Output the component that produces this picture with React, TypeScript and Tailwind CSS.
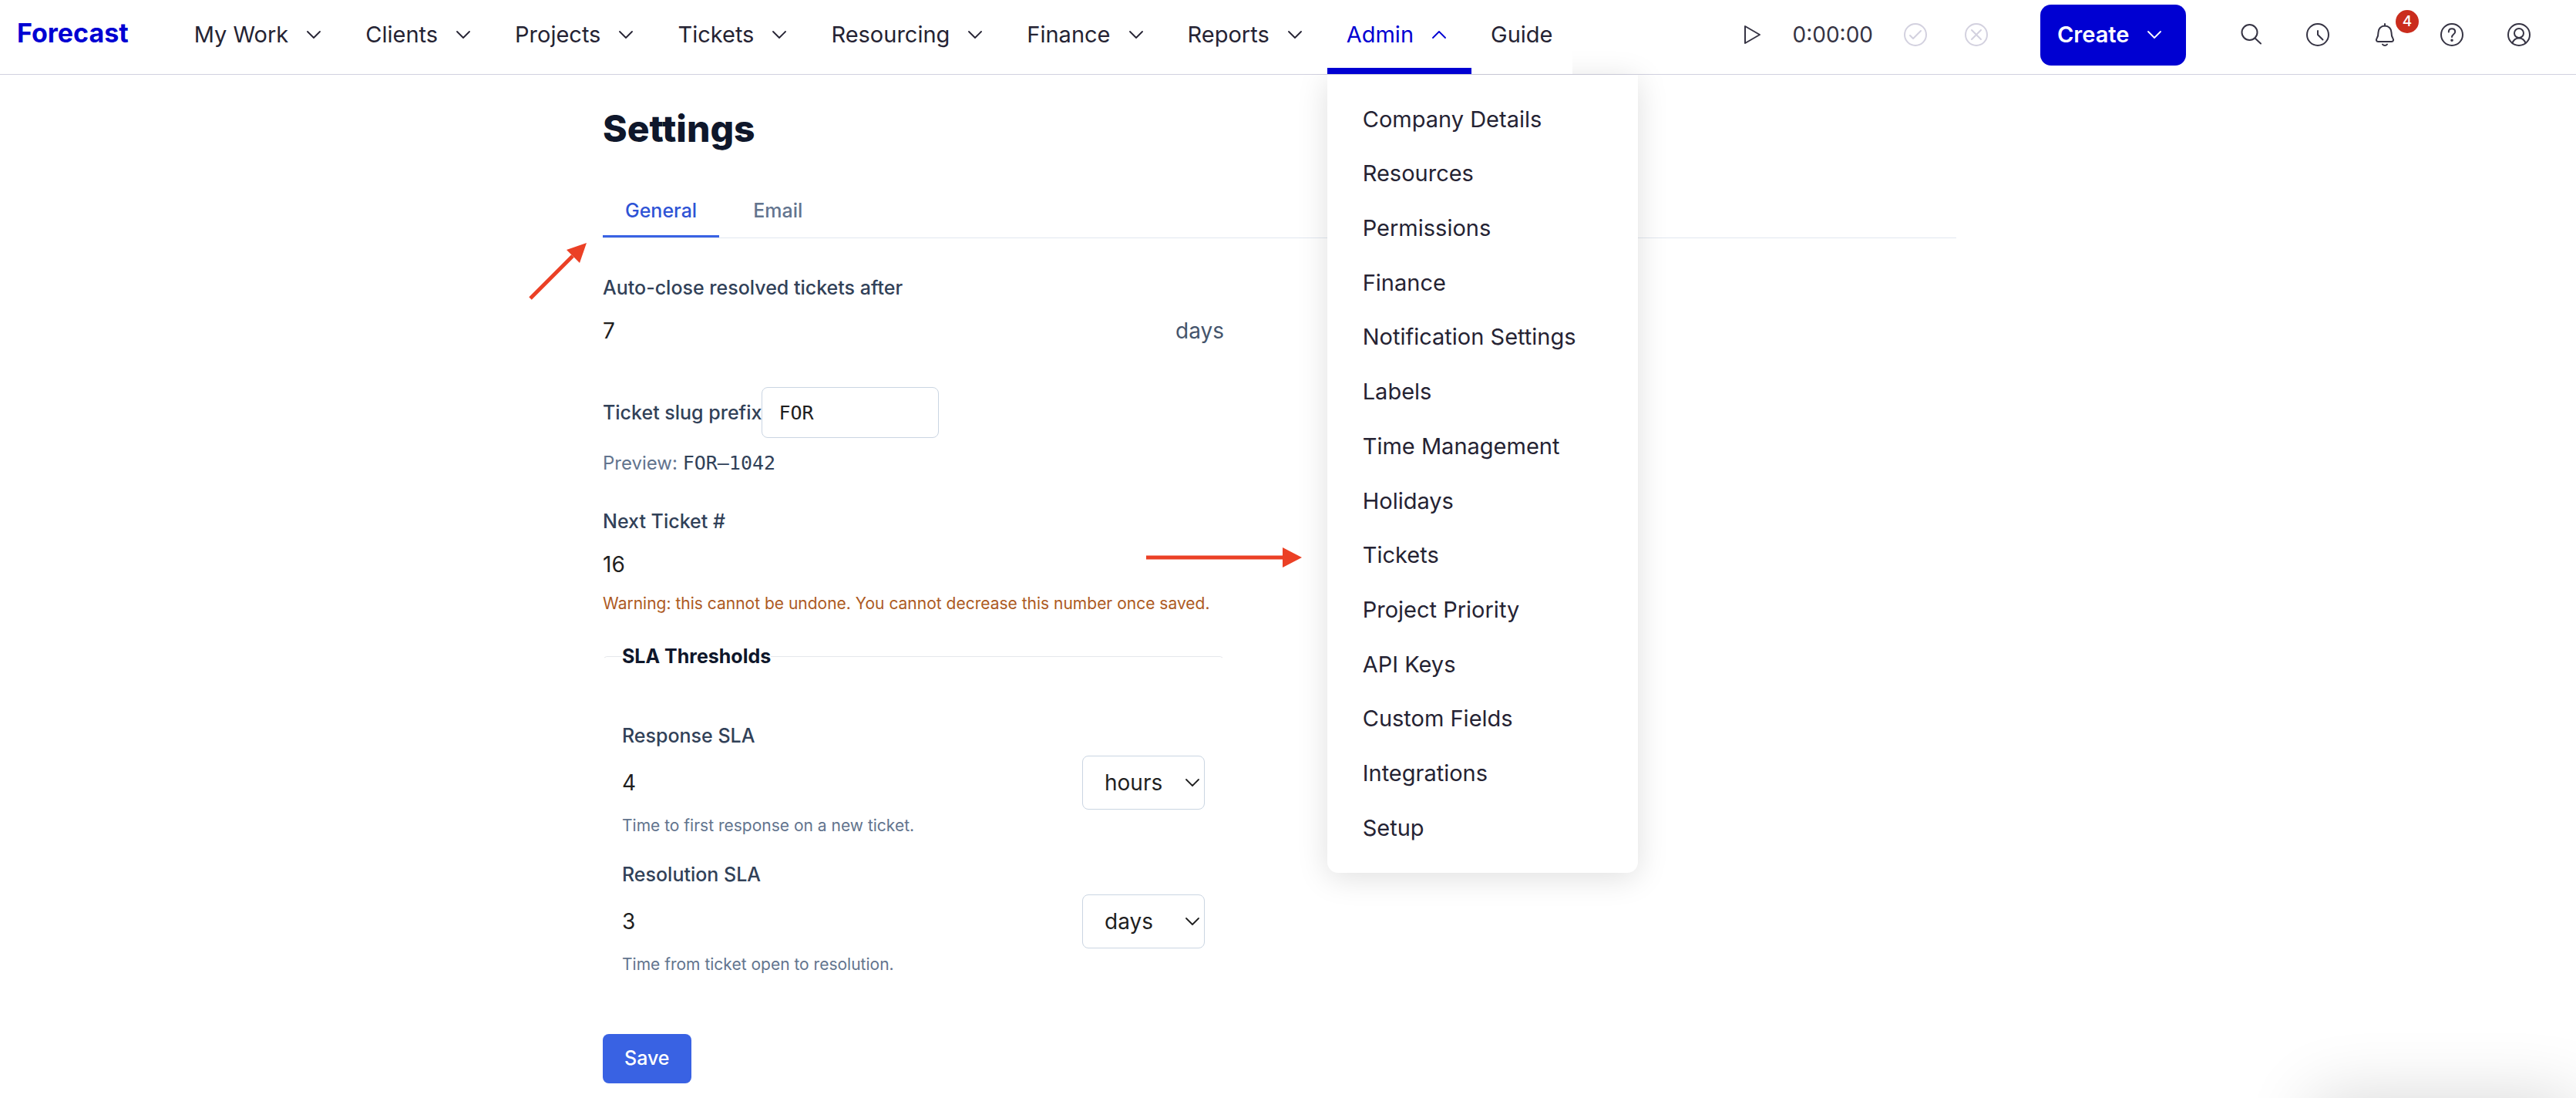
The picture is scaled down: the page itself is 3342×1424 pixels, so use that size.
import React from "react";

const NAV = ["My Work", "Clients", "Projects", "Tickets", "Resourcing", "Finance", "Reports", "Admin"];

const ADMIN_MENU = [
  "Company Details",
  "Resources",
  "Permissions",
  "Finance",
  "Notification Settings",
  "Labels",
  "Time Management",
  "Holidays",
  "Tickets",
  "Project Priority",
  "API Keys",
  "Custom Fields",
  "Integrations",
  "Setup",
];

function Chevron({ up = false }: { up?: boolean }) {
  return (
    <svg width="18" height="10" viewBox="0 0 18 10" fill="none" stroke="currentColor" strokeWidth="1.8" strokeLinecap="round" strokeLinejoin="round" aria-hidden="true">
      <path d={up ? "M1 9 9 1l8 8" : "M1 1l8 8 8-8"} />
    </svg>
  );
}

function Icon({ children }: { children: React.ReactNode }) {
  return (
    <svg className="block" width="30" height="30" viewBox="0 0 30 30" fill="none" stroke="currentColor" strokeWidth="2" strokeLinecap="round" strokeLinejoin="round" aria-hidden="true">
      {children}
    </svg>
  );
}

function NavItem({ label }: { label: string }) {
  const active = label === "Admin";
  return (
    <li className="relative">
      <button
        type="button"
        aria-expanded={active}
        className={
          active
            ? "relative z-20 flex h-24 items-center gap-6 border-b-8 border-[#0000d2] bg-white pt-0.5 pr-[33px] pl-[25px] text-[#0000d2]"
            : "relative z-20 flex h-24 items-center gap-6 bg-white pr-[33px] pb-[6px] pl-[25px]"
        }
      >
        {label}
        <Chevron up={active} />
      </button>
      {active && (
        <div className="absolute top-[97px] left-0 z-10 w-[403px] rounded-b-[14px] bg-white pt-[22px] pb-[23px] shadow-[0_6px_40px_rgba(0,0,0,0.13)]">
          <ul className="grid h-[990px] auto-rows-fr">
            {ADMIN_MENU.map((item) => (
              <li key={item} className="flex">
                <a href="#" className="flex flex-1 items-center pl-[46px]">
                  {item}
                </a>
              </li>
            ))}
          </ul>
        </div>
      )}
    </li>
  );
}

function Header() {
  return (
    <header className="flex h-[97px] items-stretch justify-between border-b border-[#d1d1df] pr-[59px] pl-[22px] text-[29px] text-[#252333]">
      <div className="flex">
        <a href="#" className="mr-[60px] flex items-center pb-3 text-[34px] font-bold text-[#0000d2]">
          Forecast
        </a>
        <nav>
          <ul className="flex">
            {NAV.map((label) => (
              <NavItem key={label} label={label} />
            ))}
            <li>
              <a href="#" className="relative z-20 flex h-24 items-center bg-white px-[25px] pb-[6px]">
                Guide
              </a>
            </li>
          </ul>
        </nav>
      </div>

      <div className="flex items-center pb-[6px] text-[#363444]">
        <button type="button" aria-label="Start timer">
          <Icon>
            <path d="M6 4v22l19-11z" />
          </Icon>
        </button>
        <span className="ml-[38px] text-[28px]">0:00:00</span>
        <button type="button" aria-label="Save timer" className="ml-10 text-[#d3d1df]">
          <Icon>
            <circle cx="15" cy="15" r="14" />
            <path d="M8 16l4 4 10-10" />
          </Icon>
        </button>
        <button type="button" aria-label="Discard timer" className="ml-[49px] text-[#d3d1df]">
          <Icon>
            <circle cx="15" cy="15" r="14" />
            <path d="M9 9l12 12M21 9L9 21" />
          </Icon>
        </button>
        <button type="button" className="ml-[68px] flex h-[79px] w-[189px] items-center justify-between rounded-[14px] bg-[#0000d2] pr-8 pl-[22px] font-semibold text-white">
          Create
          <Chevron />
        </button>
        <div className="ml-[69px] flex gap-[57px]">
          <button type="button" aria-label="Search">
            <Icon>
              <circle cx="13.500" cy="12" r="10" />
              <path d="M20.500 19.500l7.500 7" />
            </Icon>
          </button>
          <button type="button" aria-label="Time tracking">
            <Icon>
              <circle cx="15" cy="15" r="14" />
              <path d="M15 10v5l6.500 6.500" />
            </Icon>
          </button>
          <button type="button" aria-label="Notifications, 4 unread" className="relative">
            <Icon>
              <path d="M15 1v2.500" />
              <path d="M15 3.500c-5 0-8.500 3.800-8.500 8.500 0 4.500-.8 6.300-2 8-1.200 1.800-.5 4 1.800 4h17.400c2.300 0 3-2.200 1.800-4-1.200-1.700-2-3.500-2-8 0-4.700-3.500-8.500-8.500-8.500z" />
              <path d="M12 27.500c1.500 2 4.500 2 6 0" />
            </Icon>
            <span className="absolute -top-[17px] left-[29px] flex size-[30px] items-center justify-center rounded-full bg-[#ca2c1d] text-[19px] font-medium text-white">4</span>
          </button>
          <button type="button" aria-label="Help">
            <Icon>
              <circle cx="15" cy="15" r="14" />
              <path d="M10.800 11.500c0-2.700 1.800-4.300 4.200-4.300s4.200 1.600 4.200 4c0 3.400-4.200 3.200-4.200 6.800" />
              <circle cx="15" cy="22.300" r=".8" fill="currentColor" />
            </Icon>
          </button>
          <button type="button" aria-label="Account">
            <Icon>
              <circle cx="15" cy="15" r="14" />
              <circle cx="15" cy="13" r="6" />
              <path d="M6.500 26c1.300-4 4.600-6.500 8.500-6.500s7.200 2.500 8.500 6.500" />
            </Icon>
          </button>
        </div>
      </div>
    </header>
  );
}

function SlaField({ id, label, value, unit, help }: { id: string; label: string; value: string; unit: string; help: string }) {
  return (
    <div>
      <label htmlFor={id} className="block text-[25px] leading-9 font-medium text-slate-700">
        {label}
      </label>
      <div className="mt-2 flex h-[70px] items-stretch justify-between text-[28px] text-[#1f1f1f]">
        <input id={id} defaultValue={value} className="min-w-0 flex-1 bg-transparent outline-none" />
        <div className="relative w-[159px]">
          <select aria-label={label + " unit"} defaultValue={unit} className="size-full appearance-none rounded-lg border border-slate-300 bg-white pl-7">
            <option>hours</option>
            <option>days</option>
          </select>
          <span className="pointer-events-none absolute inset-y-0 right-[7px] flex items-center">
            <Chevron />
          </span>
        </div>
      </div>
      <p className="mt-[7px] text-[21px] leading-7 text-slate-500">{help}</p>
    </div>
  );
}

export default function App() {
  return (
    <div className="min-h-screen overflow-hidden bg-white font-['Inter',sans-serif]">
      <Header />
      <main className="pr-[22px] pb-[19px]">
        <div className="mx-auto max-w-[1756px]">
          <h1 className="pt-[41px] text-[48px] leading-[58px] font-extrabold text-slate-900">Settings</h1>

          <div className="relative mt-[38px]">
            <div role="tablist" className="flex gap-[15px] border-b border-slate-200 text-[25px] leading-9 font-medium">
              <button type="button" role="tab" aria-selected="true" className="border-b-[3px] border-[#3962e3] px-[29px] pt-[21px] pb-[14px] text-[#2e53d5]">
                General
              </button>
              <button type="button" role="tab" aria-selected="false" className="border-b-[3px] border-transparent px-[29px] pt-[21px] pb-[14px] text-slate-500">
                Email
              </button>
            </div>
            <svg className="absolute top-[78px] -left-24 text-[#eb4025]" width="78" height="78" viewBox="0 0 78 78" fill="currentColor" aria-hidden="true">
              <path d="M2 75 57 20" stroke="currentColor" strokeWidth="5" />
              <path d="M75 3 49 12 66 29z" />
            </svg>
          </div>

          <form className="max-w-[806px] pt-[46px]" onSubmit={(e) => e.preventDefault()}>
            <label htmlFor="auto-close" className="block text-[25px] leading-9 font-medium text-slate-700">
              Auto-close resolved tickets after
            </label>
            <div className="mt-[18px] flex text-[28px] leading-10">
              <input id="auto-close" defaultValue="7" className="min-w-0 flex-1 bg-transparent text-[#1f1f1f] outline-none" />
              <span className="text-slate-600">days</span>
            </div>

            <div className="mt-[53px] flex items-center">
              <label htmlFor="slug" className="text-[25px] leading-9 font-medium text-slate-700">
                Ticket slug prefix
              </label>
              <input id="slug" defaultValue="FOR" className="h-[66px] w-[230px] rounded-lg border border-slate-300 px-[21px] font-['DejaVu_Sans_Mono',monospace] text-[25px] text-[#1f1f1f] outline-none" />
            </div>
            <p className="mt-[17px] text-[24px] leading-8 text-slate-500">
              Preview: <code className="font-['DejaVu_Sans_Mono',monospace] text-[25px] text-slate-700">FOR–1042</code>
            </p>

            <div className="relative mt-[41px]">
              <label htmlFor="next-ticket" className="block text-[25px] leading-9 font-medium text-slate-700">
                Next Ticket #
              </label>
              <input id="next-ticket" defaultValue="16" className="mt-[18px] block w-full bg-transparent text-[28px] leading-10 text-[#1f1f1f] outline-none" />
              <p className="mt-[17px] text-[21px] leading-7 whitespace-nowrap text-[#ad5a22]">
                Warning: this cannot be undone. You cannot decrease this number once saved.
              </p>
              <svg className="absolute top-[52px] -right-[101px] text-[#eb4025]" width="202" height="26" viewBox="0 0 202 26" fill="currentColor" aria-hidden="true">
                <path d="M0 13h178" stroke="currentColor" strokeWidth="5" />
                <path d="M177 0v26l25-13z" />
              </svg>
            </div>

            <fieldset className="mt-9 rounded-md border border-transparent border-t-gray-200 px-6">
              <legend className="text-[25px] leading-9 font-bold text-slate-900">SLA Thresholds</legend>
              <div className="flex flex-col gap-[31px] pt-[67px]">
                <SlaField id="response-sla" label="Response SLA" value="4" unit="hours" help="Time to first response on a new ticket." />
                <SlaField id="resolution-sla" label="Resolution SLA" value="3" unit="days" help="Time from ticket open to resolution." />
              </div>
            </fieldset>

            <button type="submit" className="mt-[75px] h-16 rounded-lg bg-[#3962e3] px-7 text-[25px] font-medium text-white">
              Save
            </button>
          </form>
        </div>
      </main>
      <div className="pointer-events-none fixed top-full right-0 h-52 w-[340px] shadow-[0_0_90px_rgba(0,0,0,0.16)]" aria-hidden="true" />
    </div>
  );
}
